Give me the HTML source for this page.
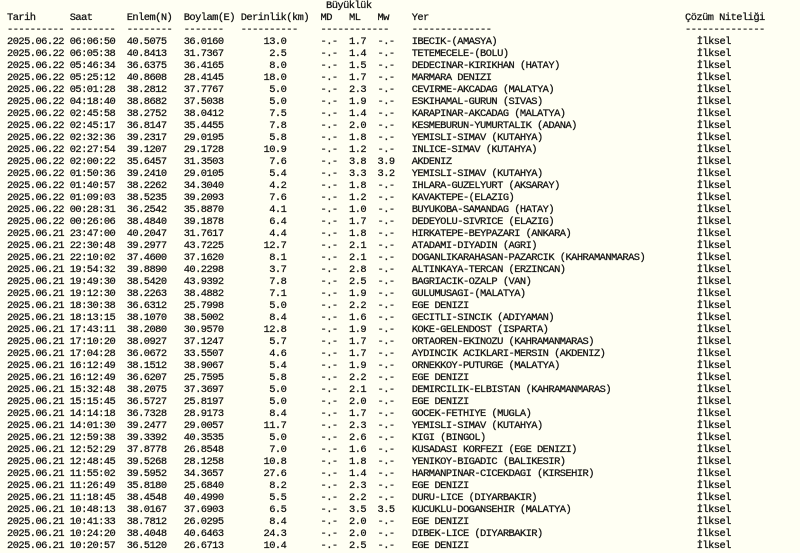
<!DOCTYPE html>
<html><head><meta charset="utf-8"><style>
html,body{margin:0;padding:0;background:#fffff3;width:800px;height:553px;overflow:hidden}
body{font-family:"Liberation Mono",monospace;font-size:10.4px;letter-spacing:-0.54px;color:#111;-webkit-text-stroke:0.25px #111;}
.r{position:relative;height:12px;line-height:12px;white-space:pre}
.r span{position:absolute;top:0}
.a{left:7px}.b{left:69.7px}.c{left:126.7px}.d{left:183.7px}
.e{left:216px;width:70.3px;text-align:right}
.f{left:320.5px}.g{left:349px}.h{left:377.5px}.i{left:411.7px}.j{left:696.7px}
.k{left:326px}.l{left:685px}
</style></head><body>
<div class="r"><span class="k">Büyüklük</span></div>
<div class="r"><span class="a">Tarih</span><span class="b">Saat</span><span class="c">Enlem(N)</span><span class="d">Boylam(E)</span><span style="left:240.7px">Derinlik(km)</span><span class="f">MD</span><span class="g">ML</span><span class="h">Mw</span><span class="i">Yer</span><span class="l">Çözüm Niteliği</span></div>
<div class="r"><span class="a">----------</span><span class="b">--------</span><span class="c">--------</span><span class="d">-------</span><span style="left:240.7px">----------</span><span class="f">------------</span><span class="i">--------------</span><span class="l">--------------</span></div>
<div id="rows"></div>
<script>
var d=[
["2025.06.22","06:06:50","40.5075","36.0160","13.0","-.-","1.7","-.-","IBECIK-(AMASYA)"],
["2025.06.22","06:05:38","40.8413","31.7367","2.5","-.-","1.4","-.-","TETEMECELE-(BOLU)"],
["2025.06.22","05:46:34","36.6375","36.4165","8.0","-.-","1.5","-.-","DEDECINAR-KIRIKHAN (HATAY)"],
["2025.06.22","05:25:12","40.8608","28.4145","18.0","-.-","1.7","-.-","MARMARA DENIZI"],
["2025.06.22","05:01:28","38.2812","37.7767","5.0","-.-","2.3","-.-","CEVIRME-AKCADAG (MALATYA)"],
["2025.06.22","04:18:40","38.8682","37.5038","5.0","-.-","1.9","-.-","ESKIHAMAL-GURUN (SIVAS)"],
["2025.06.22","02:45:58","38.2752","38.0412","7.5","-.-","1.4","-.-","KARAPINAR-AKCADAG (MALATYA)"],
["2025.06.22","02:45:17","36.8147","35.4455","7.8","-.-","2.0","-.-","KESMEBURUN-YUMURTALIK (ADANA)"],
["2025.06.22","02:32:36","39.2317","29.0195","5.8","-.-","1.8","-.-","YEMISLI-SIMAV (KUTAHYA)"],
["2025.06.22","02:27:54","39.1207","29.1728","10.9","-.-","1.2","-.-","INLICE-SIMAV (KUTAHYA)"],
["2025.06.22","02:00:22","35.6457","31.3503","7.6","-.-","3.8","3.9","AKDENIZ"],
["2025.06.22","01:50:36","39.2410","29.0105","5.4","-.-","3.3","3.2","YEMISLI-SIMAV (KUTAHYA)"],
["2025.06.22","01:40:57","38.2262","34.3040","4.2","-.-","1.8","-.-","IHLARA-GUZELYURT (AKSARAY)"],
["2025.06.22","01:09:03","38.5235","39.2093","7.6","-.-","1.2","-.-","KAVAKTEPE-(ELAZIG)"],
["2025.06.22","00:28:31","36.2542","35.8870","4.1","-.-","1.0","-.-","BUYUKOBA-SAMANDAG (HATAY)"],
["2025.06.22","00:26:06","38.4840","39.1878","6.4","-.-","1.7","-.-","DEDEYOLU-SIVRICE (ELAZIG)"],
["2025.06.21","23:47:00","40.2047","31.7617","4.4","-.-","1.8","-.-","HIRKATEPE-BEYPAZARI (ANKARA)"],
["2025.06.21","22:30:48","39.2977","43.7225","12.7","-.-","2.1","-.-","ATADAMI-DIYADIN (AGRI)"],
["2025.06.21","22:10:02","37.4600","37.1620","8.1","-.-","2.1","-.-","DOGANLIKARAHASAN-PAZARCIK (KAHRAMANMARAS)"],
["2025.06.21","19:54:32","39.8890","40.2298","3.7","-.-","2.8","-.-","ALTINKAYA-TERCAN (ERZINCAN)"],
["2025.06.21","19:49:30","38.5420","43.9392","7.8","-.-","2.5","-.-","BAGRIACIK-OZALP (VAN)"],
["2025.06.21","19:12:30","38.2263","38.4882","7.1","-.-","1.9","-.-","GULUMUSAGI-(MALATYA)"],
["2025.06.21","18:30:38","36.6312","25.7998","5.0","-.-","2.2","-.-","EGE DENIZI"],
["2025.06.21","18:13:15","38.1070","38.5002","8.4","-.-","1.6","-.-","GECITLI-SINCIK (ADIYAMAN)"],
["2025.06.21","17:43:11","38.2080","30.9570","12.8","-.-","1.9","-.-","KOKE-GELENDOST (ISPARTA)"],
["2025.06.21","17:10:20","38.0927","37.1247","5.7","-.-","1.7","-.-","ORTAOREN-EKINOZU (KAHRAMANMARAS)"],
["2025.06.21","17:04:28","36.0672","33.5507","4.6","-.-","1.7","-.-","AYDINCIK ACIKLARI-MERSIN (AKDENIZ)"],
["2025.06.21","16:12:49","38.1512","38.9067","5.4","-.-","1.9","-.-","ORNEKKOY-PUTURGE (MALATYA)"],
["2025.06.21","16:12:49","36.6207","25.7595","5.8","-.-","2.2","-.-","EGE DENIZI"],
["2025.06.21","15:32:48","38.2075","37.3697","5.0","-.-","2.1","-.-","DEMIRCILIK-ELBISTAN (KAHRAMANMARAS)"],
["2025.06.21","15:15:45","36.5727","25.8197","5.0","-.-","2.0","-.-","EGE DENIZI"],
["2025.06.21","14:14:18","36.7328","28.9173","8.4","-.-","1.7","-.-","GOCEK-FETHIYE (MUGLA)"],
["2025.06.21","14:01:30","39.2477","29.0057","11.7","-.-","2.3","-.-","YEMISLI-SIMAV (KUTAHYA)"],
["2025.06.21","12:59:38","39.3392","40.3535","5.0","-.-","2.6","-.-","KIGI (BINGOL)"],
["2025.06.21","12:52:29","37.8778","26.8548","7.0","-.-","1.6","-.-","KUSADASI KORFEZI (EGE DENIZI)"],
["2025.06.21","12:48:45","39.5268","28.1258","10.8","-.-","1.8","-.-","YENIKOY-BIGADIC (BALIKESIR)"],
["2025.06.21","11:55:02","39.5952","34.3657","27.6","-.-","1.4","-.-","HARMANPINAR-CICEKDAGI (KIRSEHIR)"],
["2025.06.21","11:26:49","35.8180","25.6840","8.2","-.-","2.3","-.-","EGE DENIZI"],
["2025.06.21","11:18:45","38.4548","40.4990","5.5","-.-","2.2","-.-","DURU-LICE (DIYARBAKIR)"],
["2025.06.21","10:48:13","38.0167","37.6903","6.5","-.-","3.5","3.5","KUCUKLU-DOGANSEHIR (MALATYA)"],
["2025.06.21","10:41:33","38.7812","26.0295","8.4","-.-","2.0","-.-","EGE DENIZI"],
["2025.06.21","10:24:20","38.4048","40.6463","24.3","-.-","2.0","-.-","DIBEK-LICE (DIYARBAKIR)"],
["2025.06.21","10:20:57","36.5120","26.6713","10.4","-.-","2.5","-.-","EGE DENIZI"]
];
var c=["a","b","c","d","e","f","g","h","i"],h="";
d.forEach(function(r){h+='<div class="r">';r.forEach(function(v,i){h+='<span class="'+c[i]+'">'+v+'</span>';});h+='<span class="j">İlksel</span></div>';});
document.getElementById("rows").innerHTML=h;
</script>
</body></html>
